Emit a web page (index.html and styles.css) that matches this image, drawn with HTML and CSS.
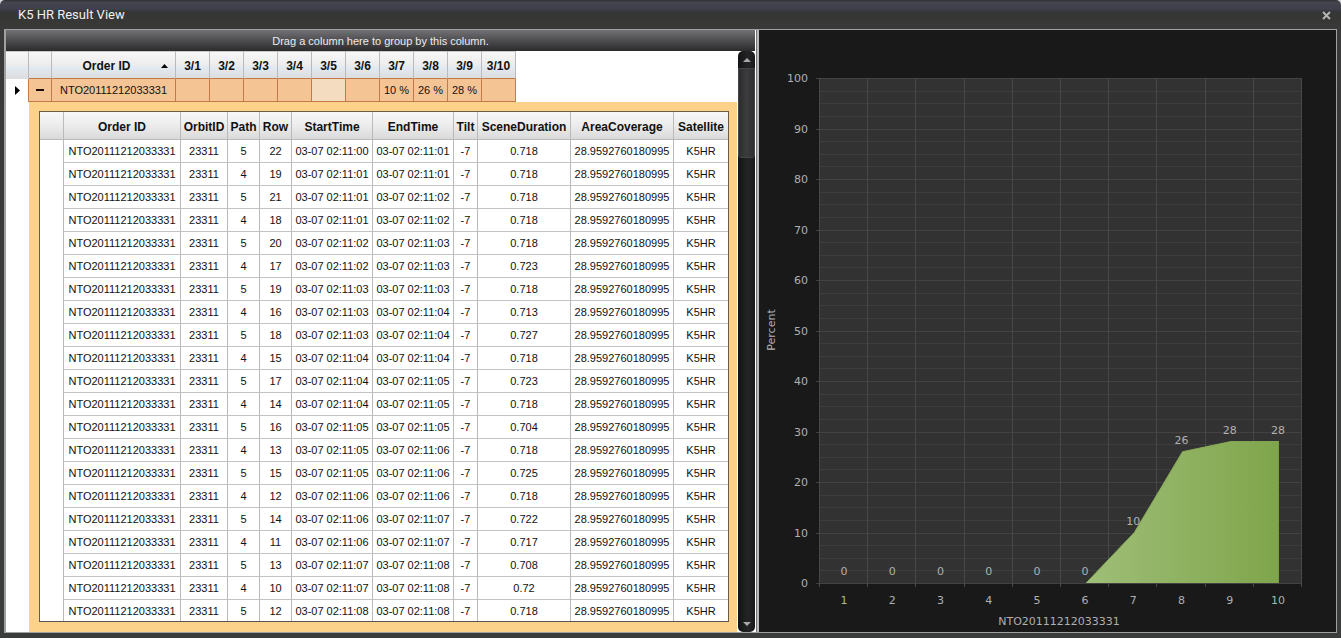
FILE: index.html
```html
<!DOCTYPE html>
<html lang="en">
<head>
<meta charset="utf-8">
<title>K5 HR Result View</title>
<link rel="stylesheet" href="styles.css">
</head>
<body>
<div class="window">
  <header class="titlebar">
    <h1 class="title">K5 HR Result View</h1>
    <button class="close" type="button" aria-label="Close">
      <svg width="9" height="9" viewBox="0 0 9 9"><path d="M1 1L8 8M8 1L1 8" stroke="#b4b4b4" stroke-width="2"/></svg>
    </button>
  </header>
  <main class="panes">
    <section class="grid-pane">
      <div class="group-bar">Drag a column here to group by this column.</div>
      <div class="grid-body">
        <div class="grid-content">
          <table class="grid orders">
            <colgroup><col class="w23"><col class="w23"><col class="w124"><col class="w34" span="10"></colgroup>
            <thead>
              <tr><th></th><th></th><th class="sorted">Order ID<svg class="sort" width="7" height="4" viewBox="0 0 7 4"><path d="M0 4L3.5 0L7 4Z"/></svg></th><th>3/1</th><th>3/2</th><th>3/3</th><th>3/4</th><th>3/5</th><th>3/6</th><th>3/7</th><th>3/8</th><th>3/9</th><th>3/10</th></tr>
            </thead>
            <tbody>
              <tr><td class="marker"><svg width="5" height="9" viewBox="0 0 5 9"><path d="M0 0L5 4.5L0 9Z"/></svg></td><td><button class="expander" type="button" aria-label="Collapse row"></button></td><td>NTO20111212033331</td><td></td><td></td><td></td><td></td><td class="current"></td><td></td><td>10 %</td><td>26 %</td><td>28 %</td><td></td></tr>
            </tbody>
          </table>
          <div class="detail">
            <table class="grid scenes">
              <colgroup><col class="w24"><col class="w117"><col class="w47"><col class="w32"><col class="w32"><col class="w81"><col class="w81"><col class="w24"><col class="w93"><col class="w103"><col class="w54"></colgroup>
              <thead>
                <tr><th></th><th>Order ID</th><th>OrbitID</th><th>Path</th><th>Row</th><th>StartTime</th><th>EndTime</th><th>Tilt</th><th>SceneDuration</th><th>AreaCoverage</th><th>Satellite</th></tr>
              </thead>
              <tbody id="scene-rows"></tbody>
            </table>
          </div>
        </div>
        <div class="scrollbar">
          <button class="scroll-btn" type="button" aria-label="Scroll up"><svg width="8" height="4" viewBox="0 0 8 4"><path d="M0 4L4 0L8 4Z" fill="#a8a8a8"/></svg></button>
          <div class="track"><div class="thumb"></div></div>
          <button class="scroll-btn" type="button" aria-label="Scroll down"><svg width="8" height="4" viewBox="0 0 8 4"><path d="M0 0L4 4L8 0Z" fill="#a8a8a8"/></svg></button>
        </div>
      </div>
    </section>
    <div class="splitter"></div>
    <section class="chart-pane">
      <svg class="chart" id="chart" viewBox="0 0 577 602" role="img" aria-label="Percent by day for NTO20111212033331">
        <defs><linearGradient id="area-fill"><stop offset="0" stop-color="#9fbe78"/><stop offset="1" stop-color="#7fa54b"/></linearGradient></defs>
      </svg>
    </section>
  </main>
</div>
<script src="app.js"></script>
</body>
</html>
```
FILE: styles.css
```css
* { box-sizing: border-box; }

body {
  margin: 0;
  background: #d8d8dc;
  font-family: "Liberation Sans", Arial, sans-serif;
  font-size: 11px;
  color: #111;
}

button {
  border: 0;
  padding: 0;
  background: none;
  display: flex;
  align-items: center;
  justify-content: center;
}

.window {
  min-height: 100vh;
  display: flex;
  flex-direction: column;
  padding: 0 4px 5px;
  border-radius: 5px 5px 0 0;
  background: linear-gradient(#2e2e34 0, #45454f 2px, #3f404b 9px, #33353a 12px, #363734 14px, #393939 29px, #3b3d3d);
}

.titlebar {
  height: 29px;
  display: flex;
  align-items: center;
  justify-content: space-between;
  padding: 1px 5px 0 14px;
}

.title {
  margin: 0;
  font: 400 13px/28px Roboto, sans-serif;
  color: #f0f0f0;
}

.close { width: 12px; height: 12px; }

.panes {
  flex: 1;
  display: grid;
  grid-template-columns: 750fr 3px 577fr;
  border: 1px solid #a0a0a0;
  border-left-width: 2px;
}

.grid-pane {
  min-width: 0;
  display: flex;
  flex-direction: column;
  background: #fff;
  border-right: 1px solid #fff;
}

.group-bar {
  height: 21px;
  background: linear-gradient(#737377, #4d4d50 50%, #2b2b2c);
  color: #ececec;
  font-size: 11px;
  line-height: 23px;
  text-align: center;
}

.grid-body { flex: 1; display: flex; }

.grid-content {
  flex: 1;
  min-width: 0;
  display: flex;
  flex-direction: column;
  overflow: hidden;
}

.grid {
  table-layout: fixed;
  border-collapse: separate;
  border-spacing: 0;
  width: 0;
}

.w23 { width: 23px; }
.w24 { width: 24px; }
.w32 { width: 32px; }
.w34 { width: 34px; }
.w47 { width: 47px; }
.w54 { width: 54px; }
.w81 { width: 81px; }
.w93 { width: 93px; }
.w103 { width: 103px; }
.w117 { width: 117px; }
.w124 { width: 124px; }

.grid th,
.grid td {
  height: 23px;
  padding: 0;
  text-align: center;
  white-space: nowrap;
  border-right: 1px solid #bababa;
  border-bottom: 1px solid #c4c4c4;
}

.grid th {
  height: 28px;
  padding-top: 2px;
  font-size: 12px;
  background: linear-gradient(#f8f8f8, #ececec 50%, #dadada);
  border-bottom-color: #bbb;
}

.orders th {
  background: linear-gradient(#c8c8c8 1px, #f7f7f7 1px, #ededee 50%, #e2eaf0 60%, #dcdddf);
  border-bottom-color: #c4794a;
}
.orders th:first-child { border-bottom-color: #ddd; }
.orders .sorted { position: relative; padding-right: 14px; }
.sort { position: absolute; right: 7px; top: 13px; }

.orders td {
  background: #f5c495;
  border-color: #c4794a;
}

.orders td.marker { background: #fff; border-bottom: 0; }
.orders td.current { background: #f4dcc0; }
.marker svg { display: block; margin: 0 auto; }

.expander { width: 100%; height: 22px; }
.expander::before { content: ""; width: 8px; height: 2px; background: #1a0e04; }

.detail {
  flex: 1;
  margin-left: 23px;
  padding: 9px 10px 9px;
  background: #fcd28b;
}

.scenes { background: #fff; border: 1px solid #6b5c43; border-bottom-color: #555; }
.scenes th:last-child, .scenes td:last-child { border-right: 0; }
.scenes tr:last-child td { height: 21px; border-bottom: 0; }
.scenes tbody td:first-child { border-bottom: 0; }

.scrollbar {
  width: 17px;
  margin-left: 1px;
  display: flex;
  flex-direction: column;
  border-radius: 5px;
  background: linear-gradient(90deg, #141416, #242427 60%, #19191a);
}

.scroll-btn { height: 17px; }
.track { flex: 1; }
.thumb {
  height: 90px;
  border: 1px solid #454548;
  border-radius: 0 0 3px 3px;
  background: linear-gradient(90deg, #2c2c2e, #3c3c3f 50%, #2e2e30);
}

.splitter { background: linear-gradient(90deg, #77777a 1px, #b9b9bd 1px); }

.chart-pane { min-width: 0; background: #191919; display: flex; }

.chart {
  width: 100%;
  flex: 1;
  font-family: "DejaVu Sans", sans-serif;
  font-size: 11px;
  fill: #b0b0b0;
}

.plot { fill: #323232; }
.line { stroke: #3e3e3e; }
.line-major { stroke: #424242; }
.line-col { stroke: #484848; }
.area { fill: url(#area-fill); }
.area-edge { fill: none; stroke: #86ab55; }
.center { text-anchor: middle; }
.end { text-anchor: end; }
```
FILE: app.js
```js
// [path, row, start second, end second, duration]; seconds are counted from 02:11:00
const scenes = [
  [5, 22, 0, 1, "0.718"], [4, 19, 1, 1, "0.718"], [5, 21, 1, 2, "0.718"],
  [4, 18, 1, 2, "0.718"], [5, 20, 2, 3, "0.718"], [4, 17, 2, 3, "0.723"],
  [5, 19, 3, 3, "0.718"], [4, 16, 3, 4, "0.713"], [5, 18, 3, 4, "0.727"],
  [4, 15, 4, 4, "0.718"], [5, 17, 4, 5, "0.723"], [4, 14, 4, 5, "0.718"],
  [5, 16, 5, 5, "0.704"], [4, 13, 5, 6, "0.718"], [5, 15, 5, 6, "0.725"],
  [4, 12, 6, 6, "0.718"], [5, 14, 6, 7, "0.722"], [4, 11, 6, 7, "0.717"],
  [5, 13, 7, 8, "0.708"], [4, 10, 7, 8, "0.72"], [5, 12, 8, 8, "0.718"]
];
const time = s => `03-07 02:11:${String(s).padStart(2, "0")}`;
document.getElementById("scene-rows").innerHTML = scenes.map(([path, row, a, b, d]) =>
  "<tr>" + ["", "NTO20111212033331", 23311, path, row, time(a), time(b), -7, d, "28.9592760180995", "K5HR"]
    .map(v => `<td>${v}</td>`).join("") + "</tr>").join("");

const percent = [0, 0, 0, 0, 0, 0, 10, 26, 28, 28];
const left = 61, right = 543, ceiling = 48, floor = 553;
const step = (right - left) / percent.length;
const y = v => floor - v * (floor - ceiling) / 100;
const x = i => left + step * (i + 0.5);
const line = (x1, y1, x2, y2, c) =>
  `<line class="${c}" shape-rendering="crispEdges" x1="${x1}" y1="${y1}" x2="${x2}" y2="${y2}"/>`;
const text = (tx, ty, t, c) => `<text class="${c}" x="${tx}" y="${ty}">${t}</text>`;

let out = `<rect class="plot" x="${left}" y="${ceiling}" width="${right - left}" height="${floor - ceiling}"/>`;
for (let v = 0; v <= 100; v += 2.5) {
  const major = v % 10 === 0;
  const ly = Math.round(y(v)) + 0.5;
  out += line(major ? left - 4 : left, ly, right, ly, major ? "line-major" : "line");
  if (major) out += text(49, Math.round(y(v)) + 4, v, "end");
}
for (let i = 0; i <= percent.length; i++) {
  const lx = Math.round(left + step * i) - 0.5;
  out += line(lx, ceiling, lx, floor + 4, "line-col");
}
const pts = percent.map((v, i) => [x(i) + 1, y(v)]).slice(5);
const edge = pts.map(p => p.join(",")).join(" ");
out += `<polygon class="area" points="${edge} ${pts[4][0]},${floor}"/><polyline class="area-edge" points="${edge}"/>`;
percent.forEach((v, i) => {
  out += text(x(i), Math.round(y(v)) - 8, v, "center");
  out += text(x(i), 574, i + 1, "center");
});
out += text(300, 595, "NTO20111212033331", "center");
out += `<text class="center" transform="translate(16 300) rotate(-90)">Percent</text>`;
document.getElementById("chart").insertAdjacentHTML("beforeend", out);
```
